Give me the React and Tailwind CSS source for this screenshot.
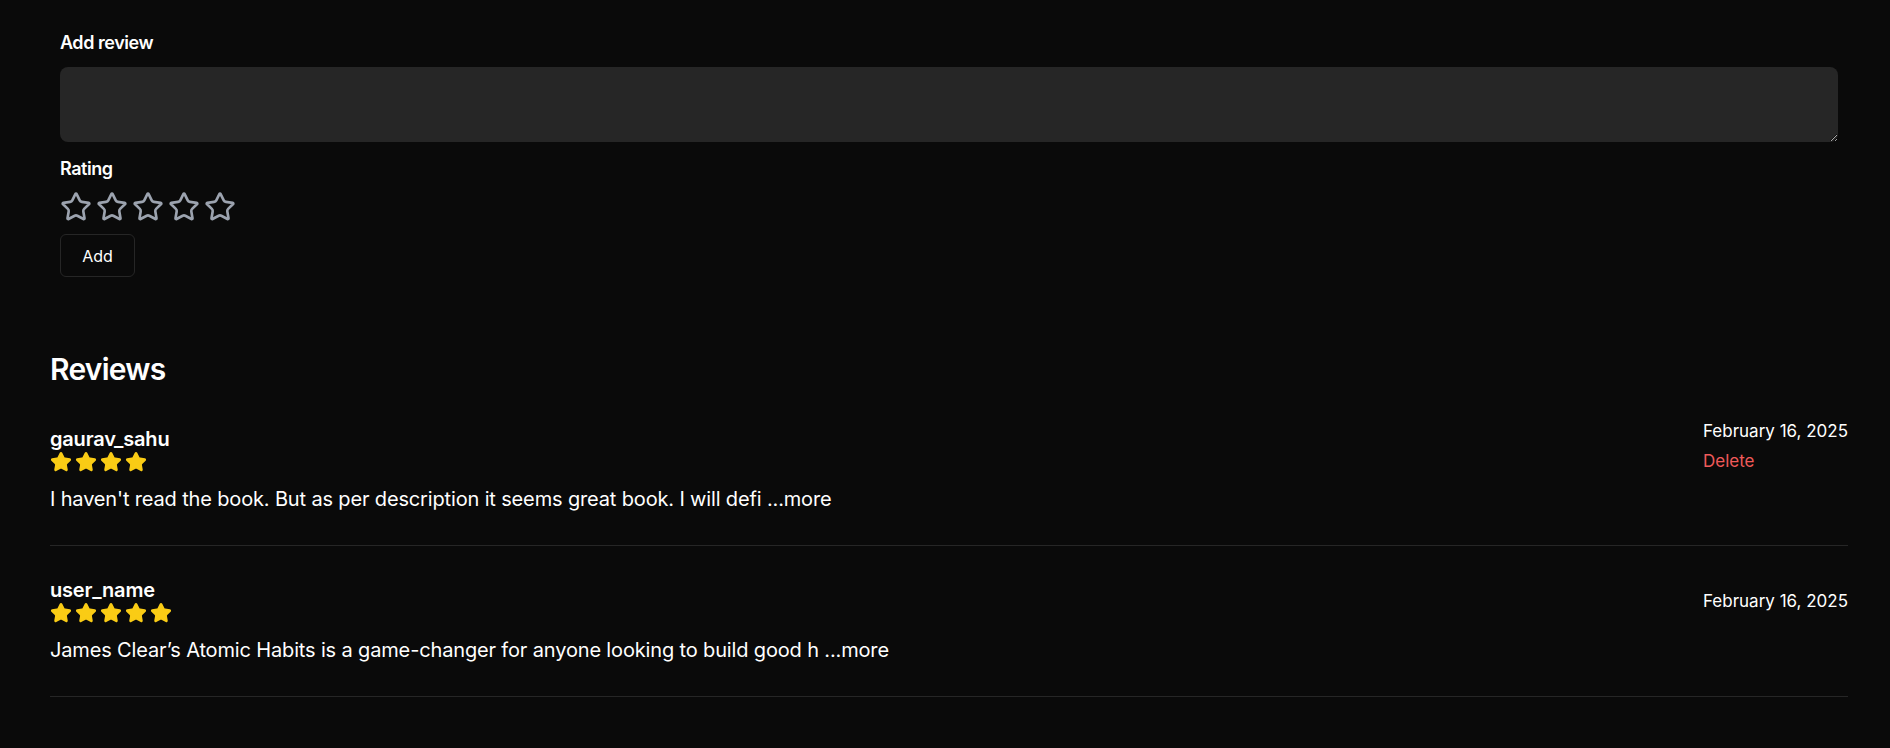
import { Star } from 'lucide-react'

const reviews = [
  {
    id: 1,
    user: 'gaurav_sahu',
    rating: 4,
    date: 'February 16, 2025',
    text: "I haven't read the book. But as per description it seems great book. I will defi",
    own: true,
  },
  {
    id: 2,
    user: 'user_name',
    rating: 5,
    date: 'February 16, 2025',
    text: 'James Clear’s Atomic Habits is a game-changer for anyone looking to build good h',
    own: false,
  },
]

export default function App() {
  return (
    <div className="min-h-screen w-full bg-[#0a0a0a] text-white pl-[50px] pr-[42px] font-['Inter',sans-serif]">
      <div className="mx-[10px] pt-[31px] flex flex-col">
        <label className="text-lg leading-6 font-semibold tracking-tight">Add review</label>
        <textarea className="mt-3 h-[75px] w-full rounded-lg bg-[#262626] px-3 py-2 text-white outline-none" />
        <span className="mt-[15px] text-lg leading-6 font-semibold tracking-tight">Rating</span>
        <div className="mt-[10px] flex gap-1">
          {[1, 2, 3, 4, 5].map((n) => (
            <Star key={n} size={32} strokeWidth={2} className="text-[#9ca3af]" />
          ))}
        </div>
        <button className="mt-[11px] h-[43px] w-[75px] rounded-md border border-[#262626] text-base text-white">
          Add
        </button>
      </div>

      <div className="mt-[74px]">
        <h2 className="text-3xl leading-9 font-semibold tracking-tight">Reviews</h2>
        <div className="flex flex-col">
          {reviews.map((r) => (
            <div key={r.id} className="py-8 border-b border-[#262626]">
              <div className="flex items-center justify-between">
                <div className="flex flex-col self-end">
                  <span className="text-xl leading-6 font-semibold tracking-[-0.2px]">{r.user}</span>
                  <div className="flex gap-[3px]">
                    {Array.from({ length: r.rating }).map((_, i) => (
                      <Star key={i} size={22} className="text-[#facc15] fill-[#facc15]" />
                    ))}
                  </div>
                </div>
                <div className="flex flex-col items-start">
                  <span className="text-[17px] leading-6">{r.date}</span>
                  {r.own && <button className="mt-[6px] text-[17px] leading-6 text-[#f05a5a]">Delete</button>}
                </div>
              </div>
              <p className="mt-3 text-xl leading-7 tracking-[-0.15px]">
                {r.text} <span className="cursor-pointer">...more</span>
              </p>
            </div>
          ))}
        </div>
      </div>
    </div>
  )
}
